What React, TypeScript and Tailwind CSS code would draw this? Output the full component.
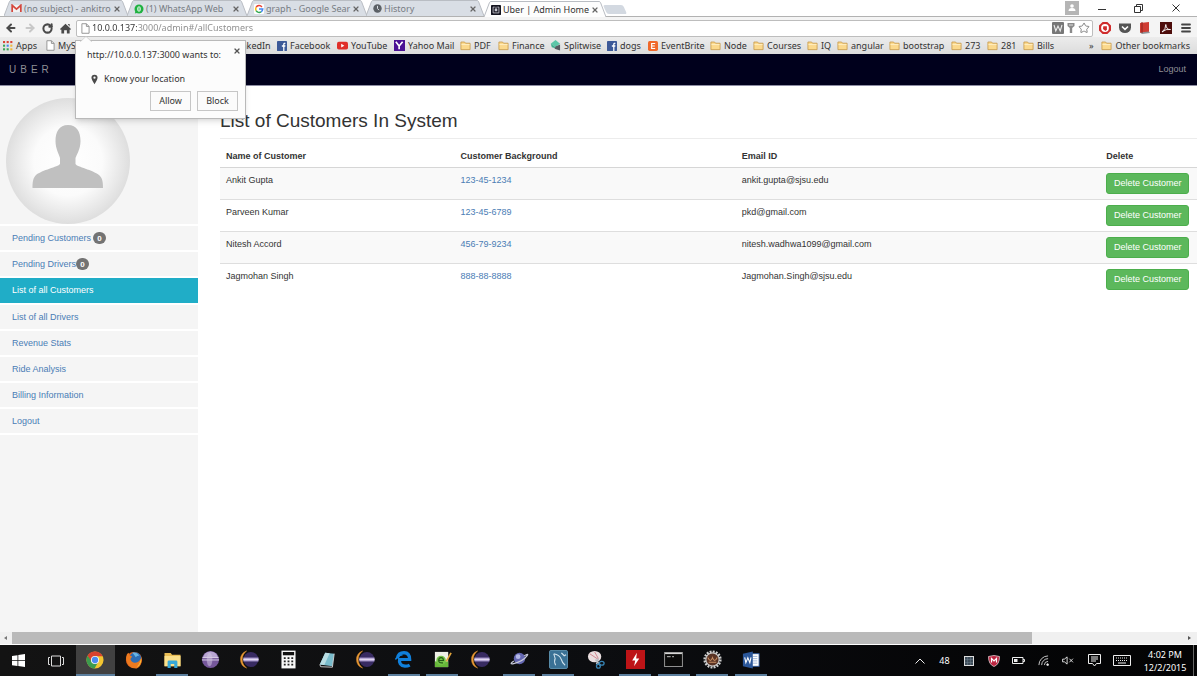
import React from "react";
import { RotateCw, ArrowLeft, ArrowRight, Star, Menu, X } from "lucide-react";

type IconProps = { className?: string };

/* ---------- small drawings ---------- */

const Gmail = () => (
  <svg viewBox="0 0 12 10" className="h-[9px] w-[11px] shrink-0">
    <path d="M1 1h10v8H1z" fill="#f3f3f3" />
    <path d="M1.2 9V1.4L6 5.6l4.8-4.2V9" fill="none" stroke="#d5473c" strokeWidth="1.9" />
  </svg>
);
const WhatsApp = () => (
  <svg viewBox="0 0 12 12" className="h-[10px] w-[10px] shrink-0">
    <circle cx="6" cy="6" r="5.4" fill="#1fb141" />
    <path d="M1 11.5l1-4 3 3z" fill="#1fb141" />
    <ellipse cx="6" cy="6" rx="2.2" ry="3.2" fill="#e9f8ec" />
    <path d="M6 4v4" stroke="#1fb141" strokeWidth="1.2" />
  </svg>
);
const Google = () => (
  <svg viewBox="0 0 24 24" className="h-[10px] w-[10px] shrink-0">
    <rect width="24" height="24" rx="3" fill="#fff" />
    <path d="M19 7a8.5 8.5 0 0 0-14 1" fill="none" stroke="#ea4335" strokeWidth="3.6" />
    <path d="M5 8a9 9 0 0 0 0 8" fill="none" stroke="#fbbc05" strokeWidth="3.6" />
    <path d="M5 16a8.5 8.5 0 0 0 12 3" fill="none" stroke="#34a853" strokeWidth="3.6" />
    <path d="M12 12h9a9 9 0 0 1-4 7" fill="none" stroke="#4285f4" strokeWidth="3.6" />
  </svg>
);
const Clock = () => (
  <svg viewBox="0 0 12 12" className="h-[9px] w-[9px] shrink-0">
    <circle cx="6" cy="6" r="5.6" fill="#5b6066" />
    <path d="M6 2.5V6l2 2.2" fill="none" stroke="#dfe3e8" strokeWidth="1.3" />
  </svg>
);
const UberMark = () => (
  <svg viewBox="0 0 12 12" className="h-[10px] w-[10px] shrink-0">
    <rect width="12" height="12" rx="1" fill="#14141f" />
    <path d="M4.500 2.500H2.500v7h7v-7H7.500" fill="none" stroke="#c9c9d2" strokeWidth="1" />
    <path d="M6 2v3" stroke="#c9c9d2" />
    <rect x="4.5" y="4.5" width="3" height="3" fill="#c9c9d2" />
  </svg>
);
const PageIcon = ({ className }: IconProps) => (
  <svg viewBox="0 0 10 12" className={className}>
    <path d="M1 .7h5l3 3v7.6H1z" fill="#fff" stroke="#8d8d8d" />
    <path d="M6 .7v3h3" fill="none" stroke="#8d8d8d" />
  </svg>
);
const Folder = () => (
  <svg viewBox="0 0 12 12" className="h-[11px] w-[11px] shrink-0">
    <path d="M1 2.2h4l1 1.3h5v7H1z" fill="#fbd98d" stroke="#c79a4b" strokeWidth=".9" />
    <path d="M1.6 5h8.8" stroke="#fff0c4" strokeWidth="1" />
  </svg>
);
const AppsIcon = () => (
  <svg viewBox="0 0 11 11" className="h-[10px] w-[10px] shrink-0">
    <g fill="#db4437"><rect width="2.3" height="2.3" /><rect x="4" width="2.3" height="2.3" /><rect x="8" width="2.3" height="2.3" /></g>
    <rect y="4" width="2.3" height="2.3" fill="#3aa757" />
    <rect x="4" y="4" width="2.3" height="2.3" fill="#4587f2" />
    <rect x="8" y="4" width="2.3" height="2.3" fill="#f0b93a" />
    <g fill="#3aa757"><rect y="8" width="2.3" height="2.3" /><rect x="4" y="8" width="2.3" height="2.3" /></g>
    <rect x="8" y="8" width="2.3" height="2.3" fill="#f0b93a" />
  </svg>
);
const Facebook = () => (
  <svg viewBox="0 0 12 12" className="h-[10px] w-[10px] shrink-0">
    <rect width="12" height="12" rx="1" fill="#3c5998" />
    <path d="M7.4 12V7h-1.6V5.2h1.6V3.8c0-1.4.8-2 2.6-1.8v1.6c-.9 0-1.1.1-1.1.7v.9h1.2L9.9 7H8.9v5" fill="#fff" />
  </svg>
);
const YouTube = () => (
  <svg viewBox="0 0 12 12" className="h-[11px] w-[11px] shrink-0">
    <rect y="2" width="12" height="8.4" rx="2" fill="#e02f2a" />
    <path d="M4.6 4.2v4L8 6.2z" fill="#fff" />
  </svg>
);
const Yahoo = () => (
  <svg viewBox="0 0 12 12" className="h-[11px] w-[11px] shrink-0">
    <rect width="12" height="12" fill="#4a1094" />
    <path d="M2 2l3.6 4.6V10M9.4 2L5.6 6.6" fill="none" stroke="#fff" strokeWidth="1.8" />
  </svg>
);
const Splitwise = () => (
  <svg viewBox="0 0 12 12" className="h-[11px] w-[11px] shrink-0">
    <path d="M6 0l5 4-5 3.5L.8 4z" fill="#5cc7a8" />
    <path d="M.8 4L6 7.5V9L2 8z" fill="#3fae8f" />
    <path d="M6 7l5-2v6.5L5 9.5z" fill="#555b60" />
  </svg>
);
const EventBrite = () => (
  <svg viewBox="0 0 12 12" className="h-[10px] w-[10px] shrink-0">
    <rect width="12" height="12" rx="2" fill="#f0682a" />
    <path d="M8.6 3H4.4v6h4.2M4.4 6h3.8" fill="none" stroke="#fff" strokeWidth="1.4" />
  </svg>
);

/* ---------- browser chrome ---------- */

function Tab({ icon, title, active, className }: { icon: React.ReactNode; title: string; active?: boolean; className: string }) {
  const fill = active ? "#fdfdfd" : "#d9dee5";
  return (
    <div className={`flex h-4 items-stretch ${className}`}>
      <svg viewBox="0 0 7 16" className="h-4 w-[7px] shrink-0">
        <path d="M0 16L5.5 1.5Q6 .5 7 .5V16z" fill={fill} />
        <path d="M0 16L5.5 1.5Q6 .5 7 .5" fill="none" stroke="#b9bdc3" />
      </svg>
      <div className={`flex flex-1 items-center gap-[2px] border-t border-[#b9bdc3] ${active ? "bg-[#fdfdfd] text-[#333]" : "bg-[#d9dee5] text-[#777c83]"}`}>
        {icon}
        <span className="flex-1 text-[9px] leading-3 whitespace-nowrap">{title}</span>
        <button aria-label={`Close ${title}`} className="shrink-0">
          <X className="size-2 text-[#666]" strokeWidth={3.600} />
        </button>
      </div>
      <svg viewBox="0 0 7 16" className="h-4 w-[7px] shrink-0">
        <path d="M7 16L1.5 1.5Q1 .5 0 .5V16z" fill={fill} />
        <path d="M7 16L1.5 1.5Q1 .5 0 .5" fill="none" stroke="#b9bdc3" />
      </svg>
    </div>
  );
}

function TabStrip() {
  return (
    <div className="flex h-[17px] items-end border-b border-[#b2b2b2] bg-white">
      <Tab className="w-[127px] pl-1" icon={<Gmail />} title="(no subject) - ankitro" />
      <Tab className="w-[120px]" icon={<WhatsApp />} title="(1) WhatsApp Web" />
      <Tab className="w-[119px]" icon={<Google />} title="graph - Google Sear" />
      <Tab className="w-[118px]" icon={<Clock />} title="History" />
      <Tab className="relative -mb-px w-[121px]" active icon={<UberMark />} title="Uber | Admin Home" />
      <button aria-label="New tab" className="mb-[2px] h-[9px] w-5 skew-x-[24deg] rounded-xs bg-[#d3d9e1]" />
      <div className="mr-[3px] ml-auto flex h-full items-center">
        <svg viewBox="0 0 14 14" className="mr-1 h-3.5 w-3.5">
          <rect width="14" height="14" fill="#b5b5b5" />
          <circle cx="7" cy="5" r="1.8" fill="#fff" />
          <path d="M3.5 10q0-3 3.5-3t3.5 3z" fill="#fff" />
        </svg>
        <button aria-label="Minimize" className="flex w-[37px] justify-center">
          <svg viewBox="0 0 8 8" className="size-2"><path d="M0 5.5h8" stroke="#333" /></svg>
        </button>
        <button aria-label="Restore" className="flex w-[37px] justify-center">
          <svg viewBox="0 0 9 9" className="size-[9px]" fill="none" stroke="#333"><path d="M.5 2.5h6v6h-6zM2.5 2.5v-2h6v6h-2" /></svg>
        </button>
        <button aria-label="Close window" className="flex w-[37px] justify-center">
          <svg viewBox="0 0 8 8" className="size-2" stroke="#333"><path d="M.5 .5l7 7M7.500 .5l-7 7" /></svg>
        </button>
      </div>
    </div>
  );
}

function Toolbar() {
  return (
    <div className="flex h-[20px] items-center bg-[#f4f4f4] pt-[2px]">
      <div className="flex w-[76px] items-center justify-around px-[2px] text-[#4a4a4a]">
        <button aria-label="Back"><ArrowLeft className="size-3" strokeWidth={4} /></button>
        <button aria-label="Forward"><ArrowRight className="size-3 text-[#c8c8c8]" strokeWidth={4} /></button>
        <button aria-label="Reload"><RotateCw className="size-[11px]" strokeWidth={4.400} /></button>
        <button aria-label="Home">
          <svg viewBox="0 0 12 12" className="size-[11px]"><path d="M6 .800L12 6.500l-1 1-.500-.500V11.500H7.500V8h-3v3.500h-3V7L1 7.500l-1-1z M8.500 1h2v3z" fill="#4a4a4a" /></svg>
        </button>
      </div>
      <div className="flex h-[17px] flex-1 items-center gap-[2px] rounded-xs border border-[#bdbdbd] bg-white pr-[2px] pl-1">
        <PageIcon className="h-[11px] w-[9px] shrink-0" />
        <input
          aria-label="Address"
          defaultValue="10.0.0.137:3000/admin#/allCustomers"
          className="min-w-0 flex-1 bg-[linear-gradient(90deg,#333_45px,#8a8a8a_45px)] bg-clip-text text-[9px] leading-3 text-transparent outline-none"
        />
        <svg viewBox="0 0 12 12" className="size-3">
          <rect width="12" height="12" rx="1" fill="#777" />
          <path d="M2 3l1.800 6L6 4l2.200 5L10 3" fill="none" stroke="#eee" strokeWidth="1.100" />
        </svg>
        <svg viewBox="0 0 10 12" className="h-3 w-2.5"><path d="M1.500 1h7v3l-2.300 2v5H3.800V6L1.500 4z" fill="#8a8a8a" /><path d="M3 3h4" stroke="#ddd" /></svg>
        <Star className="size-3 text-[#777]" strokeWidth={1.8} />
      </div>
      <div className="flex w-[104px] items-center justify-between pr-[5px] pl-1.5">
        <svg viewBox="0 0 12 12" className="size-3">
          <path d="M3.600 0h4.800L12 3.600v4.800L8.400 12H3.600L0 8.400V3.600z" fill="#cf2b2b" />
          <circle cx="6" cy="6" r="3.900" fill="#fff" />
          <path d="M4.300 4.200h3.600v3.200L6.500 9 4 7z" fill="#cf2b2b" />
        </svg>
        <svg viewBox="0 0 12 12" className="size-3">
          <path d="M0 1.500h12v4a6 5.500 0 0 1-12 0z" fill="#555" />
          <path d="M3 4.500l3 2.800 3-2.800" fill="none" stroke="#fff" strokeWidth="1.600" />
        </svg>
        <svg viewBox="0 0 12 12" className="size-3">
          <path d="M1 1l9-1v10l-9 1z" fill="#cf3c33" /><path d="M1 10.500l9-1 1 1.500-8 1z" fill="#8d9296" /><path d="M3 0v11" stroke="#8b211c" />
        </svg>
        <svg viewBox="0 0 12 12" className="ml-px size-3">
          <rect width="12" height="12" fill="#4d0d0b" />
          <path d="M2 10Q6 7 5.800 2.500 6.500 8 10.500 7.500 6 6.500 2 10z" fill="none" stroke="#fff" strokeWidth=".9" />
        </svg>
        <button aria-label="Menu"><Menu className="size-3 text-[#444]" strokeWidth={3.600} /></button>
      </div>
    </div>
  );
}

const bookmarks = [
  { name: "Apps", w: "w-[43px]", icon: <AppsIcon /> },
  { name: "MySJSU", w: "w-[175px]", icon: <PageIcon className="h-[11px] w-[9px] shrink-0" /> },
  { name: "LinkedIn", w: "w-[56px]", icon: <Facebook /> },
  { name: "Facebook", w: "w-[60px]", icon: <Facebook /> },
  { name: "YouTube", w: "w-[57px]", icon: <YouTube /> },
  { name: "Yahoo Mail", w: "w-[66px]", icon: <Yahoo /> },
  { name: "PDF", w: "w-[38px]", icon: <Folder /> },
  { name: "Finance", w: "w-[52px]", icon: <Folder /> },
  { name: "Splitwise", w: "w-[57px]", icon: <Splitwise /> },
  { name: "dogs", w: "w-[41px]", icon: <Facebook /> },
  { name: "EventBrite", w: "w-[62px]", icon: <EventBrite /> },
  { name: "Node", w: "w-[43px]", icon: <Folder /> },
  { name: "Courses", w: "w-[54px]", icon: <Folder /> },
  { name: "IQ", w: "w-[30px]", icon: <Folder /> },
  { name: "angular", w: "w-[52px]", icon: <Folder /> },
  { name: "bootstrap", w: "w-[62px]", icon: <Folder /> },
  { name: "273", w: "w-[36px]", icon: <Folder /> },
  { name: "281", w: "w-[36px]", icon: <Folder /> },
  { name: "Bills", w: "w-[36px]", icon: <Folder /> },
];

function BookmarksBar() {
  return (
    <nav aria-label="Bookmarks" className="flex h-[17px] items-center bg-linear-to-b from-[#ececec] to-[#dcdcdc] pl-[3px] text-[9px] leading-3 whitespace-nowrap text-[#333]">
      {bookmarks.map((b) => (
        <a key={b.name} href="#" className={`flex shrink-0 items-center gap-[3px] ${b.w}`}>
          {b.icon}
          {b.name}
        </a>
      ))}
      <span className="ml-auto pr-2">»</span>
      <a href="#" className="flex items-center gap-[3px] pr-[7px]">
        <Folder />
        Other bookmarks
      </a>
    </nav>
  );
}

function LocationPrompt() {
  return (
    <div role="dialog" aria-label="Location permission" className="absolute top-[40px] left-[75px] z-10 w-[171px] border border-[#b9b9b9] bg-[#fcfcfc] pt-2 pr-[7px] pb-[7px] pl-[11px] text-[9px] leading-3 text-[#333] shadow-md">
      <svg viewBox="0 0 12 6" className="absolute -top-[5px] left-1 h-1.5 w-3">
        <path d="M0 6L6 .5 12 6" fill="#fcfcfc" stroke="#c4c4c4" strokeWidth=".6" />
      </svg>
      <div className="flex justify-between">
        <span className="whitespace-nowrap">http://10.0.0.137:3000 wants to:</span>
        <button aria-label="Dismiss" className="-mt-2 -mr-[3px]"><X className="size-2 text-[#555]" strokeWidth={3.600} /></button>
      </div>
      <div className="mt-3 flex items-center gap-1.5 pl-1">
        <svg viewBox="0 0 8 12" className="h-[11px] w-[7px]">
          <path fillRule="evenodd" d="M4 .500A3.500 3.500 0 0 1 7.500 4Q7.500 6 4 11.500 .500 6 .500 4A3.500 3.500 0 0 1 4 .500zM4 2.600a1.300 1.300 0 1 0 0 2.600 1.300 1.300 0 0 0 0-2.600z" fill="#4a4a4a" />
        </svg>
        Know your location
      </div>
      <div className="mt-1.5 flex justify-end gap-1.5">
        <button className="h-[20px] w-[41px] border border-[#c6c6c6] bg-[#fbfbfb]">Allow</button>
        <button className="h-[20px] w-[41px] border border-[#c6c6c6] bg-[#fbfbfb]">Block</button>
      </div>
    </div>
  );
}

/* ---------- admin page ---------- */

function Avatar() {
  return (
    <svg viewBox="0 0 124 126" className="ml-1.5 h-[126px] w-[124px]" role="img" aria-label="Profile">
      <defs>
        <radialGradient id="disc" cx=".5" cy=".5" r=".5">
          <stop offset="0" stopColor="#fff" />
          <stop offset=".55" stopColor="#fbfbfb" />
          <stop offset="1" stopColor="#dedede" />
        </radialGradient>
      </defs>
      <ellipse cx="62" cy="63" rx="62" ry="63" fill="url(#disc)" />
      <path d="M62 27C53 27 49.500 34 49.500 43C49.500 51 53 56 54 60V66C52 69 36 72 30 77C27 80 26.500 84 26.500 90H97C97 84 96.500 80 93 77C87 72 71 69 69.500 66V60C71 56 74.500 51 74.500 43C74.500 34 71 27 62 27Z" fill="#c0c0c0" />
    </svg>
  );
}

const menu: { label: string; badge?: string; spaced?: boolean; active?: boolean }[] = [
  { label: "Pending Customers", badge: "0", spaced: true },
  { label: "Pending Drivers", badge: "0" },
  { label: "List of all Customers", active: true },
  { label: "List of all Drivers" },
  { label: "Revenue Stats" },
  { label: "Ride Analysis" },
  { label: "Billing Information" },
  { label: "Logout" },
];

function Sidebar() {
  return (
    <aside className="w-[198px] shrink-0 bg-[#f5f5f5] pt-3">
      <Avatar />
      <ul className="flex flex-col gap-[2px] border-y-2 border-white bg-white">
        {menu.map((m) => (
          <li key={m.label}>
            <a
              href="#"
              className={`flex items-center pl-3 ${m.active ? "h-[25px] bg-[#20adc7] text-white" : "h-6 bg-[#f5f5f5] text-[#4a7db5]"} ${m.spaced ? "gap-[2px]" : ""}`}
            >
              {m.label}
              {m.badge && <span className="flex h-3 w-[13px] items-center justify-center rounded-full bg-[#737373] text-[8px] font-bold text-white">{m.badge}</span>}
            </a>
          </li>
        ))}
      </ul>
    </aside>
  );
}

const customers = [
  { name: "Ankit Gupta", id: "123-45-1234", email: "ankit.gupta@sjsu.edu" },
  { name: "Parveen Kumar", id: "123-45-6789", email: "pkd@gmail.com" },
  { name: "Nitesh Accord", id: "456-79-9234", email: "nitesh.wadhwa1099@gmail.com" },
  { name: "Jagmohan Singh", id: "888-88-8888", email: "Jagmohan.Singh@sjsu.edu" },
];

function Customers() {
  return (
    <main className="flex-1 pt-6 pl-[22px]">
      <h1 className="border-b border-[#ececec] pb-1.5 text-[19px] leading-[22px] text-[#333]">List of Customers In System</h1>
      <table className="mt-[7px] w-full table-fixed text-left">
        <thead>
          <tr className="border-b border-[#d6d6d6]">
            <th className="w-[24%] px-1.5 py-1">Name of Customer</th>
            <th className="w-[28.8%] px-1.5 py-1">Customer Background</th>
            <th className="w-[37.3%] px-1.5 py-1">Email ID</th>
            <th className="px-1.5 py-1">Delete</th>
          </tr>
        </thead>
        <tbody>
          {customers.map((c) => (
            <tr key={c.id} className="border-t border-[#dedede] align-top odd:bg-[#f9f9f9]">
              <td className="p-1.5">{c.name}</td>
              <td className="p-1.5"><a href="#" className="text-[#4a7db5]">{c.id}</a></td>
              <td className="p-1.5">{c.email}</td>
              <td className="px-1.5 py-[5px]">
                <button className="block h-[21px] w-[83px] rounded-[3px] border border-[#4cae4c] bg-[#5cb85c] text-white">Delete Customer</button>
              </td>
            </tr>
          ))}
        </tbody>
      </table>
    </main>
  );
}

/* ---------- taskbar ---------- */

const ChromeIcon = () => (
  <svg viewBox="0 0 20 20" className="size-[18px]">
    <circle cx="10" cy="10" r="9.500" fill="#f2c531" />
    <path d="M10 10L1.800 5.200A9.500 9.500 0 0 1 18.500 5.800H10z" fill="#d9412f" />
    <path d="M10 10L1.800 5.200A9.500 9.500 0 0 0 9.500 19.500L13.700 12z" fill="#3c9c4e" />
    <path d="M1.800 5.200L6.500 12 10 6z" fill="#d9412f" />
    <circle cx="10" cy="10" r="4.500" fill="#f4f4f4" />
    <circle cx="10" cy="10" r="3.500" fill="#4a8af0" />
  </svg>
);
const Firefox = () => (
  <svg viewBox="0 0 20 20" className="size-[18px]">
    <circle cx="10" cy="10" r="9" fill="#e0621b" />
    <circle cx="11.500" cy="8" r="6.500" fill="#2d6db5" />
    <path d="M8 2q5-1 8 3-3 0-4 2-2-3-4-5z" fill="#66b4e4" />
    <path d="M1.200 8Q1.500 3 4 2l1 3 3 1-2 3q1 4 5 4 4 0 7-5 1 9-5 11.500Q3 20 1.200 8z" fill="#ec7a1f" />
    <path d="M18 7q1 8-5 11 4-4 5-11z" fill="#f6c23b" />
  </svg>
);
const Explorer = () => (
  <svg viewBox="0 0 20 18" className="h-4 w-[19px]">
    <path d="M1 1h7l1.500 2H19v13H1z" fill="#e9bd54" />
    <path d="M1 4.500h18V16H1z" fill="#fbe08b" />
    <path d="M4.500 18v-7q0-1.500 1.500-1.500h8q1.500 0 1.500 1.500v7h-3.500v-4.500h-4V18z" fill="#38a9d8" />
  </svg>
);
const EclipseOld = () => (
  <svg viewBox="0 0 20 20" className="size-[19px]">
    <circle cx="10" cy="10" r="9" fill="#76589b" />
    <path d="M4 4q6-5 12 0l2 4H2z" fill="#b9a6d2" />
    <path d="M1.500 8h17M1 10.500h18" stroke="#e6def0" strokeWidth=".9" />
    <ellipse cx="9" cy="10" rx="3" ry="7" fill="#d6cae4" opacity=".5" />
  </svg>
);
const Eclipse = () => (
  <svg viewBox="0 0 20 20" className="size-[19px]">
    <path d="M7 1A9.500 9.500 0 0 0 7 19A11 11 0 0 1 7 1z" fill="#eb9a35" stroke="#eb9a35" strokeWidth=".5" />
    <circle cx="11.500" cy="10" r="8" fill="#382b62" />
    <path d="M3.500 8h16v4h-16z" fill="#b8a9d8" />
    <path d="M3.500 10h16" stroke="#efeaf8" strokeWidth=".8" />
  </svg>
);
const Calculator = () => (
  <svg viewBox="0 0 16 20" className="h-[19px] w-[15px]">
    <rect x=".5" y=".5" width="15" height="19" fill="#f8f8f8" />
    <rect x="2" y="2" width="12" height="3.500" fill="#111" />
    <path d="M3 8.500h10M3 12h10M3 15.500h10" stroke="#222" strokeWidth="2" strokeDasharray="2 2" />
  </svg>
);
const Notebook = () => (
  <svg viewBox="0 0 20 20" className="size-[18px]">
    <path d="M8 2l10 1-2 14-14-2z" fill="#79bccc" />
    <path d="M8 2l5 .5L7 15.500l-5-.5z" fill="#b9dde3" />
    <path d="M2 15l1 2.500 13 .500 2-15" fill="none" stroke="#d8d8d8" />
  </svg>
);
const Edge = () => (
  <svg viewBox="0 0 20 20" className="size-[19px]">
    <path d="M3.500 9Q4.500 2.800 10.500 2.800 16.500 3 16.500 10H6.500" fill="none" stroke="#1080dc" strokeWidth="3.400" />
    <path d="M6 8.500Q4.500 16.500 11.500 17 14.500 17 16.500 15.800" fill="none" stroke="#1080dc" strokeWidth="3.400" />
    <path d="M1.500 10Q4 6 9 5" fill="none" stroke="#1080dc" strokeWidth="1.500" />
  </svg>
);
const NotepadPlus = () => (
  <svg viewBox="0 0 20 20" className="size-[19px]">
    <path d="M2 2h14v16H2z" fill="#eef0e6" />
    <path d="M2 12h14v6H2z" fill="#67b83a" />
    <circle cx="8.500" cy="11" r="5" fill="#74c447" />
    <path d="M6 11h5q0-3-2.500-3T6 11q0 3 4.500 2.500" fill="none" stroke="#245c17" strokeWidth="1.200" />
    <path d="M19 3l-5 9" stroke="#e3a53b" strokeWidth="1.800" />
  </svg>
);
const Saturn = () => (
  <svg viewBox="0 0 20 20" className="size-[19px]">
    <circle cx="10" cy="9" r="6" fill="#6467b1" />
    <circle cx="8.500" cy="7" r="2.500" fill="#b4b8e8" />
    <path d="M15 6q5-3 3 0Q14 12 3 14.500-1 15 4 11.500" fill="none" stroke="#c7cada" strokeWidth="1.300" />
  </svg>
);
const Workbench = () => (
  <svg viewBox="0 0 20 20" className="size-[19px]">
    <rect x=".500" y=".500" width="19" height="19" rx="1.500" fill="#3a7195" stroke="#5d91b0" />
    <path d="M5 4q6 1 8 6 1 4 4 6M5 4q1 3 1.500 5Q5 12 7 16" fill="none" stroke="#d3e4ee" strokeWidth="1.100" />
    <path d="M13 3l3 3 2-1" stroke="#d3e4ee" fill="none" strokeWidth="1.300" />
  </svg>
);
const Snip = () => (
  <svg viewBox="0 0 20 20" className="size-[19px]">
    <ellipse cx="8" cy="7" rx="7" ry="6" fill="#eadfe0" />
    <path d="M3 4l9 6M8 2l4 7" stroke="#c45b66" strokeWidth=".7" />
    <path d="M9 10l5 6M12 9l-2 6" stroke="#b8bec5" strokeWidth="1.600" />
    <ellipse cx="15.500" cy="14" rx="2.500" ry="2" fill="none" stroke="#3784b5" strokeWidth="1.400" />
    <ellipse cx="12" cy="17" rx="2" ry="2" fill="none" stroke="#3784b5" strokeWidth="1.400" />
  </svg>
);
const Bolt = () => (
  <svg viewBox="0 0 20 20" className="size-[19px]">
    <rect width="20" height="20" fill="#bd1417" />
    <path d="M11.500 3L6.500 11h3.200L8.500 17l5.500-8h-3.300z" fill="#fff" />
  </svg>
);
const Terminal = () => (
  <svg viewBox="0 0 20 16" className="h-[15px] w-[19px]">
    <rect x=".500" y=".500" width="19" height="15" fill="#0a0a0a" stroke="#9a9a9a" />
    <path d="M1 1.500h18" stroke="#d7d7d7" strokeWidth="1.500" />
    <path d="M3 5h4M8.500 5h2" stroke="#ccc" />
  </svg>
);
const Gear = () => (
  <svg viewBox="0 0 20 20" className="size-[19px]">
    <circle cx="10" cy="10" r="8.300" fill="none" stroke="#cfcfcf" strokeWidth="2.600" strokeDasharray="2 1.260" />
    <circle cx="10" cy="10" r="7" fill="#5a3324" stroke="#c8c8c8" strokeWidth="1.200" />
    <path d="M5 8q3 6 5 0 2 6 5 0M6 13h8" fill="none" stroke="#c98f63" strokeWidth="1.100" />
  </svg>
);
const Word = () => (
  <svg viewBox="0 0 20 20" className="size-[18px]">
    <rect x="9" y="3" width="10" height="14" fill="#fff" stroke="#2b579a" />
    <path d="M12 6h5M12 8.500h5M12 11h5M12 13.500h5" stroke="#7b9acb" strokeWidth=".8" />
    <path d="M1 3l11-2.500v19L1 17z" fill="#2b579a" />
    <path d="M3 7l1.300 6L6.500 7.500 8.700 13 10 7" fill="none" stroke="#fff" strokeWidth="1.200" />
  </svg>
);

const apps = [
  { name: "Chrome", icon: <ChromeIcon />, open: true, focused: true },
  { name: "Firefox", icon: <Firefox /> },
  { name: "File Explorer", icon: <Explorer />, open: true },
  { name: "Eclipse Classic", icon: <EclipseOld /> },
  { name: "Eclipse", icon: <Eclipse /> },
  { name: "Calculator", icon: <Calculator /> },
  { name: "Notebook", icon: <Notebook /> },
  { name: "Eclipse Mars", icon: <Eclipse /> },
  { name: "Edge", icon: <Edge />, open: true },
  { name: "Notepad", icon: <NotepadPlus />, open: true },
  { name: "Eclipse Luna", icon: <Eclipse /> },
  { name: "Saturn", icon: <Saturn />, open: true },
  { name: "Workbench", icon: <Workbench />, open: true },
  { name: "Snipping Tool", icon: <Snip /> },
  { name: "Bolt", icon: <Bolt />, open: true },
  { name: "Command Prompt", icon: <Terminal />, open: true },
  { name: "Settings Gear", icon: <Gear />, open: true },
  { name: "Word", icon: <Word />, open: true },
];

function Taskbar() {
  return (
    <footer className="flex h-[31px] items-stretch bg-linear-to-r from-[#131313] via-[#0c0d10] to-[#030304] text-white">
      <button aria-label="Start" className="flex w-9 items-center justify-center">
        <svg viewBox="0 0 13 13" className="size-[13px]" fill="#fff"><path d="M0 2l5.500-.8v5H0zM6.300 1L13 0v6.200H6.300zM0 7h5.500v5L0 11.200zM6.300 7H13v6l-6.700-1z" /></svg>
      </button>
      <button aria-label="Task view" className="flex w-10 items-center justify-center">
        <svg viewBox="0 0 16 12" className="h-3 w-4" fill="none" stroke="#ddd"><path d="M3.500 1h9v10h-9zM2 2.500H.500v7H2M14 2.500h1.500v7H14" /></svg>
      </button>
      <div className="flex w-[58%]">
        {apps.map((a) => (
          <button key={a.name} aria-label={a.name} className={`flex flex-1 flex-col items-center ${a.focused ? "bg-[#414141]" : ""}`}>
            <span className="flex flex-1 items-center">{a.icon}</span>
            <span className={`h-[2px] ${a.focused ? "w-full" : "w-8"} ${a.open ? "bg-[#5c7f9e]" : ""}`} />
          </button>
        ))}
      </div>
      <div className="ml-auto flex items-center text-[9px] leading-[13px]">
        <button aria-label="Show hidden icons" className="flex w-[25px] justify-center">
          <svg viewBox="0 0 10 6" className="h-1.5 w-2.5" fill="none" stroke="#eee"><path d="M.500 5.500L5 1l4.500 4.500" /></svg>
        </button>
        <span className="w-[25px] text-center">48</span>
        <span className="flex w-6 justify-center">
          <svg viewBox="0 0 10 10" className="size-2.5"><rect x=".500" y=".500" width="9" height="9" fill="#3e4c58" stroke="#ddd" /><path d="M3.500 1v8M6.500 1v8M1 3.500h8M1 6.500h8" stroke="#6b7c8a" strokeWidth=".5" /></svg>
        </span>
        <span className="flex w-[25px] justify-center">
          <svg viewBox="0 0 12 12" className="size-3"><path d="M.500 1.500L6 .500l5.500 1q0 8-5.500 10Q.500 9.500.500 1.500z" fill="#bd2440" stroke="#e6cdd1" strokeWidth=".8" /><path d="M3.500 7.500v-4L6 6l2.500-2.500v4" fill="none" stroke="#fff" strokeWidth="1.200" /></svg>
        </span>
        <span className="flex w-[25px] justify-center">
          <svg viewBox="0 0 13 7" className="h-[7px] w-[13px]"><path d="M.500.500h10.500v6H.500zM11 2.500h1.500v2H11" fill="none" stroke="#eee" /><rect x="2" y="2" width="3.500" height="3" fill="#eee" /></svg>
        </span>
        <span className="flex w-[25px] justify-center">
          <svg viewBox="0 0 12 12" className="size-[11px]" fill="none" stroke="#d6d6d6"><path d="M1 11A10 10 0 0 1 11 1M4 11a7 7 0 0 1 7-7M7 11a4 4 0 0 1 4-4" /><circle cx="10.500" cy="10.500" r="1" fill="#fff" /></svg>
        </span>
        <span className="flex w-6 justify-center">
          <svg viewBox="0 0 13 10" className="h-[9px] w-3" fill="none" stroke="#eee"><path d="M.500 3.500h2L5.500 1v8L2.500 6.500h-2zM8 3l4 4M12 3L8 7" /></svg>
        </span>
        <span className="flex w-7 justify-center">
          <svg viewBox="0 0 13 13" className="size-[13px]" fill="none" stroke="#eee"><path d="M.500.500h12v9H8.500l-2 2.500-2-2.500h-4zM3 3h7M3 5h7M3 7h5" /></svg>
        </span>
        <span className="flex w-7 justify-center">
          <svg viewBox="0 0 18 11" className="h-[11px] w-[18px]" fill="none" stroke="#eee"><path d="M.500.500h17v10H.500z" /><path d="M3 3h12M3 5.500h12" strokeDasharray="1 1" /><path d="M5 8h8" /></svg>
        </span>
        <span className="ml-1 w-[50px] text-center whitespace-nowrap">4:02 PM<br />12/2/2015</span>
      </div>
      <div className="ml-[3px] w-1 border-l border-[#666]" />
    </footer>
  );
}

export default function App() {
  return (
    <div className="relative flex min-h-screen flex-col bg-white pr-[2px] pb-[5px] font-['Noto_Sans',sans-serif]">
      <TabStrip />
      <Toolbar />
      <BookmarksBar />
      <LocationPrompt />
      <div className="flex flex-1 flex-col font-['Liberation_Sans',Arial,sans-serif] text-[9px] leading-[13px] text-[#333]">
        <header className="flex h-8 items-center justify-between border-b border-[#8d8da3] bg-[#00001c] pr-[11px] pl-[9px] text-[#8f8f96]">
          <span className="text-[10px] tracking-[4px]">UBER</span>
          <a href="#">Logout</a>
        </header>
        <div className="flex flex-1">
          <Sidebar />
          <Customers />
        </div>
      </div>
      <div className="mb-px flex h-3 items-center bg-[#f0f0f0] text-[#777]">
        <span className="flex w-3 justify-center"><svg viewBox="0 0 4 4" className="size-1"><path d="M3 0v4L0 2z" fill="#777" /></svg></span>
        <div className="h-full w-[85.200%] bg-[#bababa]" />
        <span className="ml-auto flex w-4 justify-center"><svg viewBox="0 0 4 4" className="size-1"><path d="M1 0v4l3-2z" fill="#555" /></svg></span>
      </div>
      <Taskbar />
    </div>
  );
}
